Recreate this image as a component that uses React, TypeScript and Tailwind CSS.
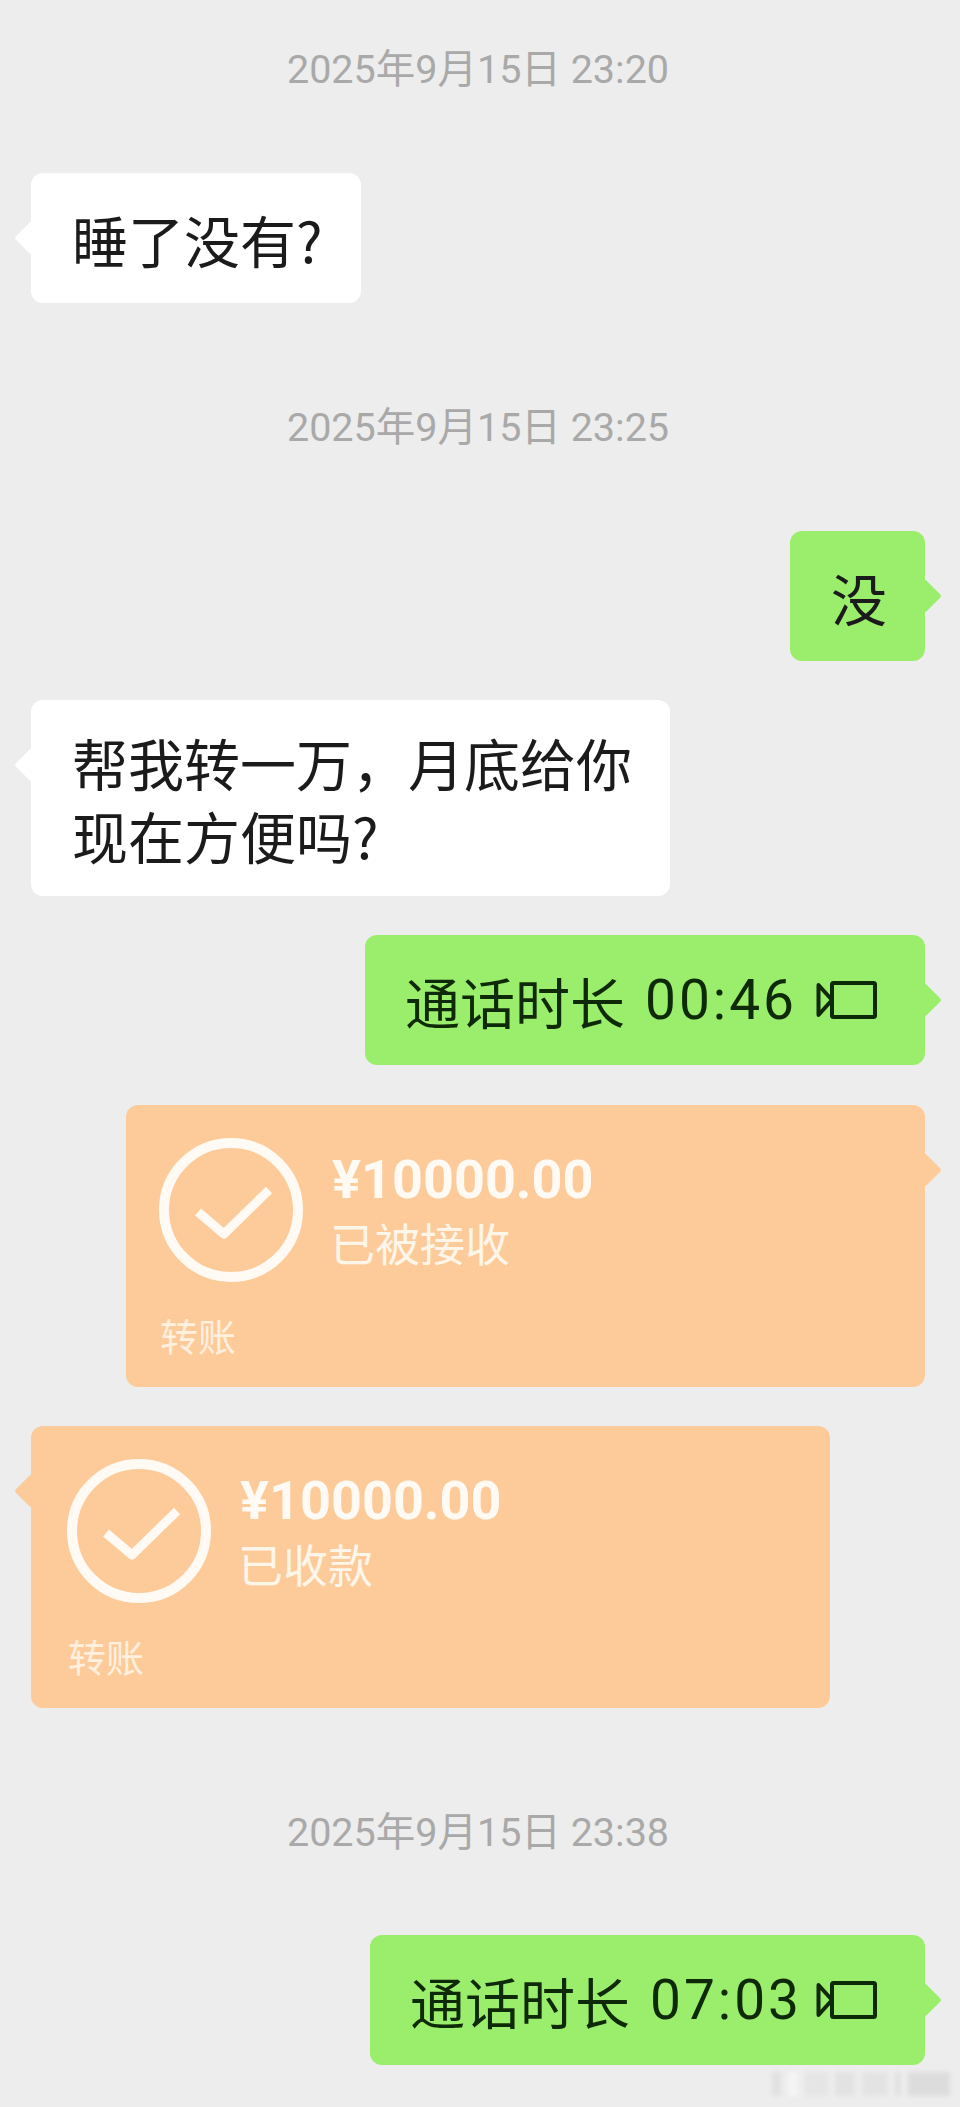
import type { ReactNode } from "react";

const cjk = "font-['Noto_Sans_CJK_SC','Noto_Sans',sans-serif]";

function Stamp({ time, className = "" }: { time: string; className?: string }) {
  return (
    <div className={`h-[50px] flex items-center justify-center text-[39.5px] text-[#a9a9a9] ${className}`}>
      <span className="font-['Roboto','Noto_Sans_CJK_SC',sans-serif]">{time}</span>
    </div>
  );
}

function Bubble({
  side,
  color,
  className = "",
  children,
}: {
  side: "left" | "right";
  color: string;
  className?: string;
  children: ReactNode;
}) {
  return (
    <div className={`relative rounded-[12px] ${color} ${side === "left" ? "self-start" : "self-end"} ${className}`}>
      <div
        className={`absolute top-[53px] w-6 h-6 rotate-45 rounded-[3px] ${color} ${
          side === "left" ? "left-[-12px]" : "right-[-12px]"
        }`}
      />
      <div className="relative h-full">{children}</div>
    </div>
  );
}

function TextBubble({ side, lines, className }: { side: "left" | "right"; lines: string[]; className: string }) {
  return (
    <Bubble side={side} color={side === "left" ? "bg-white" : "bg-[#9bed6c]"} className={className}>
      <div className="h-full pl-[41px] flex flex-col justify-center text-[56px] leading-[73px] text-[#1b1b1b] whitespace-nowrap">
        {lines.map((l) => (
          <div key={l}>{l}</div>
        ))}
      </div>
    </Bubble>
  );
}

function CallBubble({ duration, className }: { duration: string; className: string }) {
  return (
    <Bubble side="right" color="bg-[#9bed6c]" className={className}>
      <div className="h-[130px] pl-[40px] pr-[47px] flex items-center text-[55px] text-[#0f2a08] whitespace-nowrap">
        <span>通话时长</span>
        <span className="ml-[20px] tracking-[3px] font-['Roboto',sans-serif]">{duration}</span>
        <svg className="ml-auto" width="62" height="40" viewBox="0 0 62 40" fill="none" stroke="#0f2a08" strokeWidth="4" strokeLinejoin="round">
          <rect x="16" y="3" width="43" height="34" rx="1.5" />
          <path d="M16 20 2.5 5v30z" />
        </svg>
      </div>
    </Bubble>
  );
}

function TransferCard({ side, status, className }: { side: "left" | "right"; status: string; className: string }) {
  return (
    <Bubble side={side} color="bg-[#fdcb9a]" className={className}>
      <div className={`h-[282px] pt-[33px] ${side === "left" ? "pl-[36px]" : "pl-[33px]"}`}>
        <div className="flex gap-[29px]">
          <svg width="144" height="144" viewBox="0 0 144 144" fill="none" stroke="#fffaf3" strokeWidth="10">
            <circle cx="72" cy="72" r="67" />
            <path d="M39 74 65 96 110 52" strokeWidth="9" strokeLinejoin="round" />
          </svg>
          <div className="flex flex-col">
            <div className="h-[77px] flex items-end text-[54px] leading-[70px] font-bold text-[#fffaf3] font-['Roboto',sans-serif]">¥10000.00</div>
            <div className="-ml-[2px] text-[45px] leading-[56px] text-[#fff6ea]">{status}</div>
          </div>
        </div>
        <div className="mt-[28px] ml-[1px] text-[38px] leading-[50px] text-[#fff0df]">转账</div>
      </div>
    </Bubble>
  );
}

export default function App() {
  return (
    <div className={`relative w-[960px] h-[2107px] overflow-hidden bg-[#ededed] pl-[31px] pr-[35px] pt-[45px] flex flex-col ${cjk}`}>
      <Stamp time="2025年9月15日 23:20" />
      <TextBubble side="left" lines={["睡了没有?"]} className="mt-[78px] w-[330px] h-[130px]" />
      <Stamp time="2025年9月15日 23:25" className="mt-[100px]" />
      <TextBubble side="right" lines={["没"]} className="mt-[78px] w-[135px] h-[130px]" />
      <TextBubble side="left" lines={["帮我转一万，月底给你", "现在方便吗?"]} className="mt-[39px] w-[639px] h-[196px]" />
      <CallBubble duration="00:46" className="mt-[39px] w-[560px]" />
      <TransferCard side="right" status="已被接收" className="mt-[40px] w-[799px]" />
      <TransferCard side="left" status="已收款" className="mt-[39px] w-[799px]" />
      <Stamp time="2025年9月15日 23:38" className="mt-[100px]" />
      <CallBubble duration="07:03" className="mt-[77px] w-[555px]" />
      {/* blurred watermark, not readable in the reference */}
      <div className="absolute left-[772px] top-[2072px] w-[178px] h-[24px] flex gap-[7px] blur-[2px] opacity-70">
        <div className="w-[10px] bg-[#dcdcdc]" />
        <div className="w-[12px] bg-[#f7f7f7]" />
        <div className="w-[26px] bg-[#e2e2e2]" />
        <div className="w-[22px] bg-[#dedede]" />
        <div className="w-[30px] bg-[#e0e0e0]" />
        <div className="w-[6px] bg-[#dcdcdc]" />
        <div className="w-[48px] bg-[#d6d6d6]" />
      </div>
    </div>
  );
}
